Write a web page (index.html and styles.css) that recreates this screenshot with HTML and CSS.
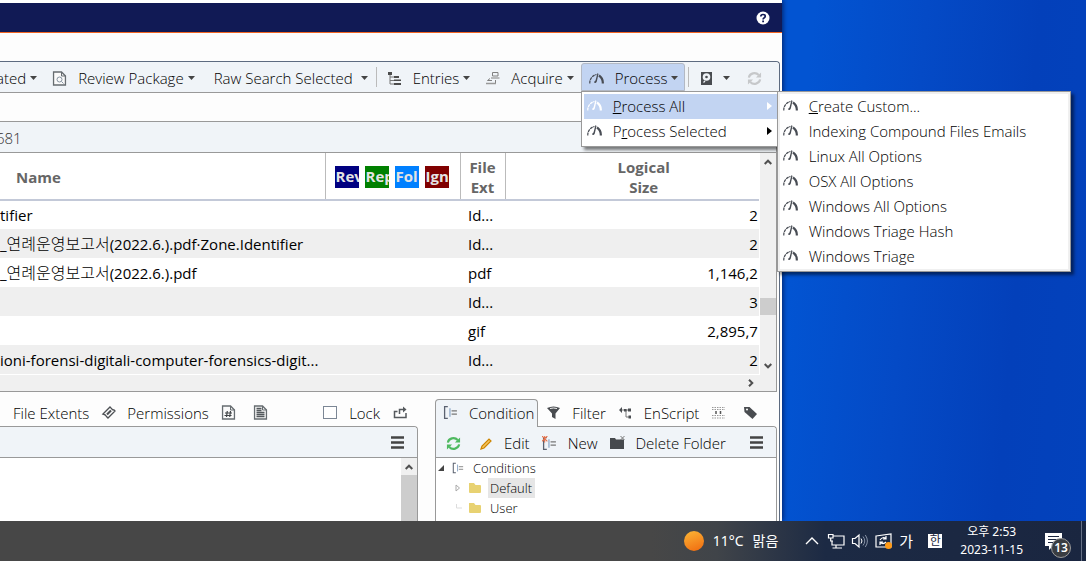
FILE: index.html
```html
<!DOCTYPE html>
<html lang="en">
<head>
<meta charset="utf-8">
<title>Evidence Processor</title>
<link rel="stylesheet" href="styles.css">
</head>
<body>
<svg class="defs" aria-hidden="true">
  <symbol id="gauge" viewBox="0 0 15 15">
    <path d="M.8 12.500A8.500 8.500 0 0 1 7.500 3.500" fill="none" stroke="currentColor" stroke-width="1.200" stroke-dasharray="3 .6"/>
    <path d="M10 4.500A9 9 0 0 1 13.800 12.500" fill="none" stroke="currentColor" stroke-width="2.200"/>
    <path d="M8.500 2L9.500 3L7.800 10.500Q6.800 12.800 5.300 11.800Q4.800 10.500 6.500 9.500Z" fill="currentColor"/>
  </symbol>
  <symbol id="caret" viewBox="0 0 7 4"><path d="M0 0H7L3.500 4Z" fill="currentColor"/></symbol>
  <symbol id="refresh" viewBox="0 0 16 16">
    <path d="M2 7A6 5.500 0 0 1 12.500 4.200M14 9A6 5.500 0 0 1 3.500 11.800" fill="none" stroke="currentColor" stroke-width="2.300"/>
    <path d="M15 1.500V7H9.500ZM1 14.500V9H6.500Z" fill="currentColor"/>
  </symbol>
  <symbol id="up" viewBox="0 0 8 6"><path d="M.7 5L4 1.700L7.300 5" fill="none" stroke="currentColor" stroke-width="2"/></symbol>
  <symbol id="lines" viewBox="0 0 13 13"><path d="M0 1.500H13M0 6.500H13M0 11.500H13" stroke="currentColor" stroke-width="2.600"/></symbol>
  <symbol id="cond" viewBox="0 0 14 14">
    <path d="M4.500 1.500H1.500V12.500H4.500" fill="none" stroke="#5b6270" stroke-width="1.200"/>
    <path d="M6.500 3V11" stroke="#7d9cc0"/><path d="M8 5.500H13M8 8.500H13" stroke="#777"/>
  </symbol>
  <symbol id="page" viewBox="0 0 14 15"><path d="M1 1H9L13 5V14H1Z" fill="#fafafa" stroke="#666c70" stroke-width="1.400"/><path d="M9 1V5H13" fill="none" stroke="#666c70"/></symbol>
  <symbol id="folder" viewBox="0 0 14 12"><path d="M1 1H6L7.500 3H12Q13 3 13 4V10Q13 11 12 11H2Q1 11 1 10Z" fill="currentColor"/></symbol>
</svg>

<main class="desktop">
  <section class="window">
    <header class="titlebar">
      <button class="help" aria-label="Help"><svg viewBox="0 0 14 14"><circle cx="7" cy="7" r="6.500" fill="#fff"/><path d="M4.800 5.500Q4.900 3.500 7 3.500Q9.300 3.500 9.200 5.300Q9.100 6.300 8 6.900Q7.100 7.400 7.100 8.400" fill="none" stroke="#111a55" stroke-width="1.700"/><path d="M6.200 9.500H8V11.200H6.200Z" fill="#111a55"/></svg></button>
    </header>

    <div class="frame">
      <nav class="toolbar">
        <button class="tool cut">ated<svg class="caret"><use href="#caret"/></svg></button>
        <button class="tool"><svg class="icon" viewBox="0 0 14 15"><use href="#page"/><circle cx="7" cy="8.500" r="2.500" fill="none" stroke="#8593a0"/><path d="M9 10.500L11 12.500" stroke="#8593a0"/></svg>Review Package<svg class="caret"><use href="#caret"/></svg></button>
        <button class="tool textonly">Raw Search Selected<svg class="caret"><use href="#caret"/></svg></button>
        <span class="sep"></span>
        <button class="tool"><svg class="icon" viewBox="0 0 15 15"><path d="M1 1H5V4H1ZM7 5H12V7H7ZM7 8.500H14V10H7ZM7 12H14V14H7Z" fill="#4c4c4c"/><path d="M3 4V13H7M3 6H7M3 9.500H7" fill="none" stroke="#777"/></svg>Entries<svg class="caret"><use href="#caret"/></svg></button>
        <button class="tool"><svg class="icon" viewBox="0 0 15 15"><path d="M7.500 1.500H13V5H7.500ZM6 7H14.500M5 7.500L2.500 9.500H7M10.500 9V12" fill="none" stroke="#808080"/><path d="M1 12.500H11" stroke="#999" stroke-width="1.500"/></svg>Acquire<svg class="caret"><use href="#caret"/></svg></button>
        <div class="dropdown">
          <button class="tool active"><svg class="icon"><use href="#gauge"/></svg>Process<svg class="caret"><use href="#caret"/></svg></button>
          <div class="menu" role="menu">
            <button class="item selected" role="menuitem"><svg class="icon"><use href="#gauge"/></svg><span><u>P</u>rocess All</span><i class="arrow"></i></button>
            <button class="item" role="menuitem"><svg class="icon"><use href="#gauge"/></svg><span>P<u>r</u>ocess Selected</span><i class="arrow"></i></button>
            <div class="menu submenu" role="menu">
              <button class="item" role="menuitem"><svg class="icon"><use href="#gauge"/></svg><span><u>C</u>reate Custom...</span></button>
              <button class="item" role="menuitem"><svg class="icon"><use href="#gauge"/></svg>Indexing Compound Files Emails</button>
              <button class="item" role="menuitem"><svg class="icon"><use href="#gauge"/></svg>Linux All Options</button>
              <button class="item" role="menuitem"><svg class="icon"><use href="#gauge"/></svg>OSX All Options</button>
              <button class="item" role="menuitem"><svg class="icon"><use href="#gauge"/></svg>Windows All Options</button>
              <button class="item" role="menuitem"><svg class="icon"><use href="#gauge"/></svg>Windows Triage Hash</button>
              <button class="item" role="menuitem"><svg class="icon"><use href="#gauge"/></svg>Windows Triage</button>
            </div>
          </div>
        </div>
        <span class="sep"></span>
        <button class="tool drive" aria-label="Drive"><svg class="icon" viewBox="0 0 15 15"><path d="M2 1H13V14H2Z" fill="#494c50"/><circle cx="7.500" cy="6" r="3.800" fill="#eef2f6"/><circle cx="7.500" cy="6" r="1.300" fill="#494c50"/><path d="M4.500 11.500L6 10" stroke="#eef2f6" stroke-width="1.300"/></svg><svg class="caret"><use href="#caret"/></svg></button>
        <button class="tool muted" aria-label="Refresh"><svg class="icon"><use href="#refresh"/></svg></button>
      </nav>

      <div class="body">
        <div class="pathbar">681</div>
        <div class="grid">
          <div class="tablebox">
            <table>
              <colgroup><col class="c-name"><col class="c-tags"><col class="c-ext"><col></colgroup>
              <thead><tr>
                <th class="name">Name</th>
                <th><div class="tags"><span class="tag review">Rev</span><span class="tag report">Rep</span><span class="tag follow">Fol</span><span class="tag ignore">Ign</span></div></th>
                <th>File<br>Ext</th>
                <th class="size">Logical<br>Size</th>
              </tr></thead>
              <tbody>
                <tr><td>tifier</td><td></td><td>Id...</td><td>2</td></tr>
                <tr><td>_<span class="ko" lang="ko">연례운영보고서</span>(2022.6.).pdf·Zone.Identifier</td><td></td><td>Id...</td><td>2</td></tr>
                <tr><td>_<span class="ko" lang="ko">연례운영보고서</span>(2022.6.).pdf</td><td></td><td>pdf</td><td>1,146,2</td></tr>
                <tr><td></td><td></td><td>Id...</td><td>3</td></tr>
                <tr><td></td><td></td><td>gif</td><td>2,895,7</td></tr>
                <tr><td>ioni-forensi-digitali-computer-forensics-digit...</td><td></td><td>Id...</td><td>2</td></tr>
              </tbody>
            </table>
          </div>
          <div class="vscroll"><svg class="chev"><use href="#up"/></svg><span class="thumb"></span><svg class="chev down"><use href="#up"/></svg></div>
          <div class="hscroll"><svg class="chev right"><use href="#up"/></svg></div>
        </div>

        <div class="panes">
          <section class="pane left">
            <div class="tabs">
              <button class="tab first">File Extents</button>
              <button class="tab"><svg class="icon" viewBox="0 0 15 15"><path d="M2 9L9 2L10.500 3.500Q11 5 13 5L14 6L7 13L5.500 11.500Q4.500 9.500 2 9Z" fill="none" stroke="#4d5054" stroke-width="1.300"/><path d="M6 9.500L10 5.500" stroke="#4d5054" stroke-width="2.200"/></svg>Permissions</button>
              <button class="tab" aria-label="Hash"><svg class="icon" viewBox="0 0 14 15"><use href="#page"/><path d="M5.800 6L5 12M9 6L8.200 12M3.500 8H10.500M3 10.500H10" stroke="#3e4245" stroke-width="1.200"/></svg></button>
              <button class="tab report-tab" aria-label="Report"><svg class="icon" viewBox="0 0 14 15"><use href="#page"/><path d="M3 3.500H8M3 5.500H8M3 7.500H11M3 9.500H11M3 11.500H11" stroke="#53585c" stroke-width="1.300"/></svg></button>
              <label class="lock"><input type="checkbox">Lock</label>
              <button class="tab" aria-label="Undock"><svg class="icon" viewBox="0 0 15 15"><path d="M4.500 6.500H1.500V12.500H13V8" fill="none" stroke="#55595d" stroke-width="1.500"/><path d="M6.500 9V4.500H11" fill="none" stroke="#55595d" stroke-width="1.500"/><path d="M10 1.500L13.500 4.500L10 7.500Z" fill="#55595d"/></svg></button>
            </div>
            <div class="box">
              <div class="panebar end"><button class="more" aria-label="Menu"><svg><use href="#lines"/></svg></button></div>
              <div class="content"><div class="vscroll"><svg class="chev"><use href="#up"/></svg><span class="thumb long"></span></div></div>
            </div>
          </section>

          <section class="pane right">
            <div class="tabs">
              <button class="tab current"><svg class="icon"><use href="#cond"/></svg>Condition</button>
              <button class="tab"><svg class="icon" viewBox="0 0 15 15"><path d="M1 3Q7.500 0 14 3L9.500 8.500V14L6 12V8.500Z" fill="#494c50"/><path d="M4 3.500Q7.500 2.500 11 3.500" stroke="#eee" fill="none"/></svg>Filter</button>
              <button class="tab"><svg class="icon" viewBox="0 0 15 15"><path d="M3 5L12 5M8 5V12H12" fill="none" stroke="#777"/><path d="M4 2L1 5L4 8ZM6 4H8.500V6.500H6ZM10 3.500H13V6.500H10ZM10.500 10.500H13V13.500H10.500Z" fill="#4b4e52"/></svg>EnScript</button>
              <button class="tab" aria-label="Hits"><svg class="icon" viewBox="0 0 15 15"><path d="M1 2.500H14M1 4.500H14M1 10.500H14M1 13H14" stroke="#999" stroke-dasharray="1.500 1"/><path d="M5 6V9M9.500 6V9" stroke="#555" stroke-width="1.500"/></svg></button>
              <button class="tab hits" aria-label="Tags"><svg class="icon" viewBox="0 0 15 15"><path d="M1 2H6.500L14 9L9.500 14L1.500 7Z" fill="#494c50"/><circle cx="4" cy="4.500" r="1" fill="#fff"/></svg></button>
            </div>
            <div class="box">
              <div class="panebar">
                <button class="tab green" aria-label="Refresh"><svg class="icon"><use href="#refresh"/></svg></button>
                <button class="tab"><svg class="icon" viewBox="0 0 15 15"><path d="M3 13L4 10L11 3L13 5L6 12Z" fill="#f5c45e" stroke="#cd8500" stroke-width="1.200"/></svg>Edit</button>
                <button class="tab"><svg class="icon" viewBox="0 0 14 14"><use href="#cond"/><path d="M0 0L5 5M5 0L0 5M2.500 0V6" stroke="#e5714b"/></svg>New</button>
                <button class="tab"><svg class="icon" viewBox="0 0 15 15"><path d="M0 2H5L6 3.500H14V13H0Z" fill="#46494d"/><path d="M10.500 0L14.500 4M14.500 0L10.500 4" stroke="#777"/></svg>Delete Folder</button>
                <button class="more" aria-label="Menu"><svg><use href="#lines"/></svg></button>
              </div>
              <ul class="tree">
                <li><svg class="twist" viewBox="0 0 8 8"><path d="M7 1V7H1Z" fill="#444"/></svg><svg class="node"><use href="#cond"/></svg><span>Conditions</span></li>
                <li class="child"><svg class="twist" viewBox="0 0 8 8"><path d="M2 1L5.500 4L2 7Z" fill="#fff" stroke="#aaa"/></svg><svg class="node gold"><use href="#folder"/></svg><span class="picked">Default</span></li>
                <li class="child"><svg class="twist" viewBox="0 0 8 8"><path d="M2.500 0V4H8" fill="none" stroke="#ddd"/></svg><svg class="node gold"><use href="#folder"/></svg><span>User</span></li>
              </ul>
            </div>
          </section>
        </div>
      </div>
    </div>
  </section>
</main>

<footer class="taskbar">
  <div class="weather"><span class="sun"></span><span>11°C</span><span>맑음</span></div>
  <div class="tray">
    <svg viewBox="0 0 18 18"><path d="M3 12L9 6L15 12" fill="none" stroke="#fff" stroke-width="1.400"/></svg>
    <svg viewBox="0 0 18 18"><path d="M6 4H17V13H5V9M9 13V16M5.500 16H15" fill="none" stroke="#fff" stroke-width="1.200"/><path d="M1.500 2.500H6V6H1.500ZM3.700 6V9H6" fill="none" stroke="#fff" stroke-width="1.200"/></svg>
    <svg viewBox="0 0 18 18"><path d="M1.500 6.500H4L8 3V15L4 11.500H1.500Z" fill="none" stroke="#fff" stroke-width="1.200"/><path d="M10 6.500Q12 9 10 11.500" fill="none" stroke="#fff"/><path d="M12 4.500Q15.500 9 12 13.500M14.300 3Q18.500 9 14.300 15" fill="none" stroke="#8691a5"/></svg>
    <svg viewBox="0 0 18 18"><path d="M1 4L16 2V15H1Z" fill="none" stroke="#fff" stroke-width="1.200"/><path d="M5 8Q8 4 11 7M11 4V7H8M11 10Q8 13 5 10M5 13V10H8" fill="none" stroke="#fff" stroke-width="1.200"/><circle cx="13.500" cy="13.500" r="3.500" fill="#ff9a16"/></svg>
    <span class="ime">가</span>
    <span class="han">한</span>
  </div>
  <time class="clock">오후 2:53<br>2023-11-15</time>
  <button class="notify" aria-label="Notifications"><svg viewBox="0 0 17 17"><path d="M0 0H17V13H8L4 17V13H0Z" fill="#fff"/><path d="M3 3.500H14M3 6.500H14M3 9.500H10" stroke="#1b2740"/></svg><span class="badge">13</span></button>
</footer>
</body>
</html>
```
FILE: styles.css
```css
* { box-sizing: border-box; }

body {
  margin: 0;
  height: 100vh;
  display: flex;
  flex-direction: column;
  overflow: hidden;
  font: 300 15px/20px "Open Sans", "Noto Sans CJK KR", sans-serif;
  color: #000;
}

button {
  font: inherit;
  color: inherit;
  background: none;
  border: 0;
  padding: 0;
}

svg { display: block; flex: none; }
.defs { position: absolute; width: 0; height: 0; }
.icon { width: 15px; height: 15px; color: #494d55; }

.desktop {
  flex: 1;
  min-height: 0;
  display: flex;
  background: linear-gradient(95deg, #0254d2 72%, #044ac6 82%, #0340ba 92%, #0342bc);
}

.window {
  width: 72%;
  display: flex;
  flex-direction: column;
  background: #fdfdfd;
  border-top: 3px solid #fff;
  box-shadow: 1px 0 5px rgba(0, 0, 30, .6);
}

.titlebar {
  height: 30px;
  flex: none;
  display: flex;
  align-items: center;
  justify-content: flex-end;
  padding-right: 12px;
  background: #111a55;
  border-bottom: 1px solid #f26522;
}

.help svg { width: 14px; height: 14px; }

.frame {
  flex: 1;
  min-height: 0;
  display: flex;
  flex-direction: column;
  margin: 28px 2px 0 0;
  border: 1px solid #5d6b80;
  border-left: 0;
  border-bottom: 0;
  border-radius: 0 4px 0 0;
}

.toolbar {
  height: 31px;
  flex: none;
  display: flex;
  align-items: center;
  background: #f0f4f8;
  border-bottom: 1px solid #999;
  border-radius: 0 4px 0 0;
}

.tool {
  height: 28px;
  flex: none;
  display: flex;
  align-items: center;
  padding: 2px 6px 0 7px;
  border: 1px solid transparent;
  white-space: nowrap;
}

.tool .icon { margin-right: 11px; }
.tool .caret { width: 7px; height: 4px; margin-left: 4px; color: #444; }
.tool.cut { padding-left: 0; border-left: 0; margin-left: -4px; }
.tool.textonly { padding-left: 11px; padding-right: 4px; }
.tool.textonly .caret { margin-left: 8px; }
.tool.drive .icon { margin-right: 5px; }
.tool.muted .icon { color: #c6c8ca; margin: 0 0 0 2px; }

.tool.active {
  background: #c2d4f2;
  border-color: #b3b9c4;
  border-radius: 3px 3px 0 0;
}

.sep { flex: none; width: 1px; height: 20px; margin: 0 2px 0 3px; background: #bbb; }

.dropdown { position: relative; flex: none; }

.menu {
  position: absolute;
  z-index: 2;
  top: 28px;
  left: 0;
  width: 197px;
  padding: 2px 0 2px 2px;
  background: #fff;
  border: 1px solid #999;
  box-shadow: 3px 3px 3px rgba(0, 0, 0, .5);
}

.submenu {
  top: -1px;
  left: 195px;
  width: 294px;
  padding: 2px;
  outline: 2px solid #f0f0f0;
  outline-offset: -3px;
}

.item {
  width: 100%;
  height: 25px;
  display: flex;
  align-items: center;
  gap: 11px;
  padding: 0 5px 2px 3px;
  text-align: left;
  white-space: nowrap;
}

.item.selected { background: #c2d4f2; }
.item.selected .icon { color: #fff; }

.arrow {
  margin-left: auto;
  border: 4px solid transparent;
  border-left: 5px solid #000;
  border-right: 0;
}

.selected .arrow { border-left-color: #fff; }

.body {
  flex: 1;
  min-height: 0;
  display: flex;
  flex-direction: column;
  padding: 28px 2px 0 0;
}

.pathbar {
  height: 32px;
  flex: none;
  line-height: 32px;
  background: #f0f4f8;
  border: 1px solid #999;
  border-left: 0;
  color: #333;
  text-indent: -4px;
}

.grid {
  flex: none;
  display: grid;
  grid-template-columns: 1fr 16px;
  background: #f0f0f0;
  border: 1px solid #999;
  border-top: 0;
  border-left: 0;
}

.tablebox { overflow: hidden; border-bottom: 1px solid #fff; border-right: 1px solid #fff; }

table {
  width: 100%;
  table-layout: fixed;
  border-collapse: collapse;
  background: #fff;
  font-weight: 400;
}

.c-name { width: 325px; }
.c-tags { width: 135px; }
.c-ext { width: 45px; }

th {
  height: 47px;
  padding: 2px 0 0;
  font-weight: 700;
  color: #666;
  border-right: 1px solid #bbb;
  border-bottom: 2px solid #c3c9d8;
}

th.name { text-align: left; padding-left: 16px; }
th.size { border-right: 0; padding-left: 23px; }

.tags { display: flex; justify-content: center; gap: 6px; padding-right: 2px; }

.tag {
  width: 24px;
  height: 22px;
  overflow: hidden;
  padding-left: 1px;
  text-align: left;
  color: #e4e4e4;
}

.review { background: #000080; }
.report { background: #008000; }
.follow { background: #0080ff; }
.ignore { background: #800000; }

td {
  height: 29px;
  padding: 0;
  white-space: nowrap;
}

td:nth-child(3) { padding-left: 8px; }
td:nth-child(4) { text-align: right; padding-right: 1px; }
tbody tr:nth-child(even) { background: #efefef; }
.ko { font-size: 16px; font-weight: 300; }

.vscroll {
  width: 16px;
  display: flex;
  flex-direction: column;
  align-items: center;
  justify-content: space-between;
  padding: 6px 0;
  background: #f0f0f0;
}

.thumb { width: 100%; height: 17px; margin-top: 84px; background: #cdcdcd; }
.chev { width: 8px; height: 6px; color: #505050; }
.chev.down { transform: rotate(180deg); }
.chev.right { transform: rotate(90deg); }

.hscroll {
  grid-column: 1 / -1;
  height: 16px;
  display: flex;
  align-items: center;
  justify-content: flex-end;
  padding-right: 21px;
}

.panes {
  flex: 1;
  min-height: 0;
  display: flex;
  gap: 17px;
}

.pane { display: flex; flex-direction: column; min-height: 0; }
.pane.left { width: 418px; }
.pane.right { flex: 1; }

.tabs {
  height: 34px;
  flex: none;
  display: flex;
  align-items: flex-end;
}

.tab {
  height: 27px;
  display: flex;
  align-items: center;
  gap: 11px;
  padding: 0 6px;
  white-space: nowrap;
}

.tab.first { padding-left: 13px; }
.report-tab { margin-left: 5px; }
.hits { margin-left: 5px; }

.tab.current {
  position: relative;
  z-index: 1;
  margin-bottom: -1px;
  height: 28px;
  padding: 0 3px 2px 7px;
  margin-right: 2px;
  background: #f0f4f8;
  border: 1px solid #999;
  border-bottom: 0;
  border-radius: 4px 4px 0 0;
}

.lock {
  height: 27px;
  margin-left: auto;
  display: flex;
  align-items: center;
  gap: 12px;
  padding-right: 7px;
}

.lock input {
  appearance: none;
  width: 14px;
  height: 13px;
  margin: 0;
  background: #fff;
  border: 1px solid #7c8795;
}

.lock + .tab { margin-right: 4px; }

.box {
  flex: 1;
  min-height: 0;
  display: flex;
  flex-direction: column;
  background: #fff;
  border: 1px solid #999;
  border-bottom: 0;
  border-radius: 0 4px 0 0;
}

.left .box { border-left: 0; }

.panebar {
  height: 31px;
  flex: none;
  display: flex;
  align-items: center;
  padding-left: 4px;
  background: #f0f4f8;
  border-bottom: 1px solid #999;
  border-radius: 0 4px 0 0;
}

.panebar .tab { padding-top: 2px; }
.more { margin-left: auto; padding-right: 13px; }
.more svg { width: 13px; height: 13px; color: #444; }
.green { margin-right: 5px; }
.green .icon { color: #4fb960; }

.content { flex: 1; min-height: 0; display: flex; justify-content: flex-end; }
.thumb.long { flex: 1; margin: 5px 0 0; }
.content .vscroll { padding-bottom: 0; }

.tree {
  margin: 0;
  padding: 0;
  list-style: none;
  font-size: 13px;
}

.tree li { height: 20px; display: flex; align-items: center; padding-left: 1px; }
.tree .child { padding-left: 18px; }
.twist { width: 8px; height: 8px; margin-right: 6px; }
.node { width: 14px; height: 12px; margin-right: 6px; }
.gold { color: #e8d272; }
.tree span { padding: 0 3px 0 2px; }
.picked { background: #e6e6e6; }

.taskbar {
  height: 40px;
  flex: none;
  position: relative;
  display: flex;
  align-items: center;
  justify-content: flex-end;
  padding-right: 15px;
  background: linear-gradient(90deg, #474747 60%, #404449 66%, #1c2a44 76%, #1a2640);
  color: #fff;
  font-size: 13px;
  font-weight: 400;
  font-family: "Noto Sans", "Noto Sans CJK KR", sans-serif;
}

.taskbar::after {
  content: "";
  position: absolute;
  top: 0;
  right: 4px;
  width: 1px;
  height: 100%;
  background: #667085;
}

.weather { display: flex; align-items: center; gap: 9px; margin-right: 25px; font-size: 14px; }

.sun {
  width: 20px;
  height: 20px;
  border-radius: 50%;
  background: linear-gradient(160deg, #fbb636, #f0690f);
}

.tray { display: flex; align-items: center; gap: 6px; }
.tray svg { width: 18px; height: 18px; }
.ime { width: 16px; font-size: 15px; }

.han {
  width: 14px;
  height: 14px;
  margin-left: 7px;
  background: #fff;
  color: #1b2740;
  font-size: 12px;
  line-height: 13px;
  text-align: center;
}

.clock { margin: 0 22px 0 18px; font-size: 12px; line-height: 18px; text-align: center; }

.notify { position: relative; }
.notify svg { width: 17px; height: 17px; margin-right: 9px; }

.badge {
  position: absolute;
  right: 0;
  top: 5px;
  width: 20px;
  height: 20px;
  border: 1px solid #9a9a9a;
  border-radius: 50%;
  background: #3a3d42;
  font-size: 12px;
  line-height: 18px;
  font-weight: 600;
}
```
